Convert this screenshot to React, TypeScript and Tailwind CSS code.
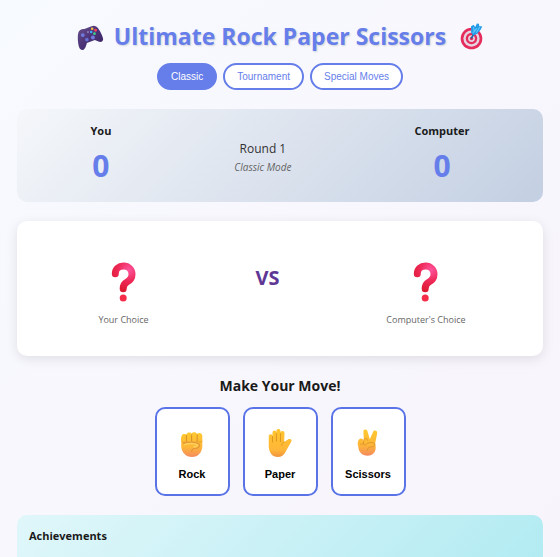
import { useState, type ReactNode } from 'react';

function Gamepad() {
  return (
    <svg viewBox="2 0 37 36" className="mt-1 h-[26px] w-[27px] shrink-0" aria-hidden="true">
      <defs>
        <linearGradient id="pad" x1="0" y1="0" x2="1" y2="1">
          <stop offset="0" stopColor="#69508a" />
          <stop offset="0.5" stopColor="#4b3278" />
          <stop offset="1" stopColor="#38225f" />
        </linearGradient>
      </defs>
      <path
        d="M3.500 11C4.500 7 8.500 5 12 5.600L22 1.800C25 0 29 1.500 31 4.500C34.500 9.500 37.500 15.500 38 19.500C38 23.500 34.500 24.500 31.500 23L26.500 20.800L15.500 24.800C14.500 28 13.500 33 10.200 34.500C6.600 35.500 4.600 32 3.800 27.500C2.800 21.500 2.500 15.500 3.500 11Z"
        fill="url(#pad)"
      />
      <circle cx="9.800" cy="14" r="2.700" fill="#7079dd" />
      <circle cx="15.500" cy="20.300" r="2.500" fill="#6771d5" />
      <circle cx="23.800" cy="17.300" r="2.700" fill="#7079dd" />
      <circle cx="17" cy="9.800" r="1.500" fill="#8d7db5" />
      <circle cx="22.800" cy="5.200" r="1.800" fill="#f4bd36" />
      <circle cx="27.500" cy="7.300" r="2" fill="#f0425c" />
      <circle cx="21.400" cy="9.700" r="1.800" fill="#3daaf5" />
      <circle cx="26" cy="12" r="1.900" fill="#3cd18b" />
    </svg>
  );
}

function Target() {
  return (
    <svg viewBox="0 0 34 40" className="h-[27px] w-[23px] shrink-0" aria-hidden="true">
      <circle cx="17" cy="23" r="16" fill="#e52c5d" />
      <circle cx="17" cy="23" r="12" fill="#e5d5e3" />
      <circle cx="17" cy="23" r="8.500" fill="#e52c5d" />
      <circle cx="17" cy="23" r="5" fill="#e5d5e3" />
      <circle cx="17" cy="23" r="2.500" fill="#e52c5d" />
      <path d="M17 22L24 11" stroke="#176a9f" strokeWidth="2.500" strokeLinecap="round" />
      <path d="M16.500 14.500L16.200 5L20 2.500L22.500 6L25 .8L28 1L28.500 4.500L33 5L30.500 10L25.500 16L19.500 18.500Z" fill="#249ce8" />
      <path d="M19 15L25 8M24 14.500L29.500 5.500M20 6L21 12" stroke="#66c8fa" strokeWidth="1.500" />
    </svg>
  );
}

function Question() {
  return (
    <svg viewBox="0 0 25 40" className="h-[40px] w-[25px]" aria-hidden="true">
      <defs>
        <radialGradient id="mark" gradientUnits="userSpaceOnUse" cx="18" cy="8" r="22">
          <stop offset="0" stopColor="#ff559e" />
          <stop offset="0.5" stopColor="#ee2957" />
          <stop offset="1" stopColor="#dc1830" />
        </radialGradient>
      </defs>
      <path
        d="M4.300 11.700C4.300 7 8 4 12.500 4C17.500 4 21 7.600 21 12.300C21 16.200 18.800 18.500 16 20C13.500 21.300 12.200 22.800 12.200 26.700"
        fill="none"
        stroke="url(#mark)"
        strokeWidth="7"
        strokeLinecap="round"
      />
      <circle cx="12.200" cy="36" r="3.500" fill="#f52d49" />
    </svg>
  );
}

function HandGradient({ id }: { id: string }) {
  return (
    <linearGradient id={id} x1="0" y1="0" x2="0" y2="1">
      <stop offset="0" stopColor="#ffc92f" />
      <stop offset="0.6" stopColor="#fdb638" />
      <stop offset="1" stopColor="#f58a60" />
    </linearGradient>
  );
}

function Fist() {
  return (
    <svg viewBox="0 0 26 32" className="h-[30px] w-[26px]" aria-hidden="true">
      <defs><HandGradient id="fist" /></defs>
      <path d="M1.500 15C1 11 1.500 7 4 6.500C5.500 6 6.500 6.500 7 7C7.500 4.500 11.500 4.200 12.500 6C14 3.800 17.500 4 18.300 6.300C20.500 4.200 24 5.500 24 8.500V19C24 26 19.500 31 13 31C6.500 31 1.500 26 1.500 19Z" fill="url(#fist)" />
      <path d="M7 7.500V14M12.600 7V14M18.500 7V14" stroke="#d18d25" strokeWidth="1" />
      <path d="M2 14.500C4 16 6.500 15.500 7.300 14C8.500 16 11.500 15.500 12.700 14C14 16 17 15.500 18.500 14C20 15.500 23 15 24 14" fill="none" stroke="#df942c" strokeWidth="0.800" />
      <path d="M4 16.500C9 14.500 17 15 20.500 17C22 18 20.500 21 18.500 21.500C15 22 14 21.500 12.500 25" fill="none" stroke="#e0933c" strokeWidth="1.100" strokeLinecap="round" />
      <path d="M4.500 18C9 16.200 15 16.400 18.800 18C19 19.300 17 20.200 14.500 20" fill="none" stroke="#ffd05a" strokeWidth="1.500" />
    </svg>
  );
}

function Palm() {
  return (
    <svg viewBox="0 0 26 32" className="h-[30px] w-[26px]" aria-hidden="true">
      <defs>
        <linearGradient id="palm" x1="0" y1="0" x2="0" y2="1">
          <stop offset="0" stopColor="#ffc52e" />
          <stop offset="0.75" stopColor="#ffb638" />
          <stop offset="1" stopColor="#ee9340" />
        </linearGradient>
      </defs>
      <path d="M1 9C1 6.200 4.500 6 5 8.500V5C5 2 9 2 9.200 5V3C9.300 .3 13.300 .3 13.500 3V5C14 2.500 18 2.800 17.800 5.500L17.400 15L21.500 12.300C24 10.700 26.500 13 24.800 15L18.800 25.500C17 29 14.500 31 10.500 31C5 31 1.500 26.500 1 20Z" fill="url(#palm)" />
      <path d="M5 9V15M9.200 6V14M13.500 6V14.500M17.400 15C15.800 15.800 15 17 14.800 18.500" fill="none" stroke="#dc951f" strokeWidth="1" strokeLinecap="round" />
    </svg>
  );
}

function Victory() {
  return (
    <svg viewBox="0 0 24 32" className="h-[30px] w-[22px]" aria-hidden="true">
      <defs><HandGradient id="victory" /></defs>
      <path d="M7.500 14L7 4C6.800 .7 10.800 .5 11.500 3.500L14 12L17.500 4C18.800 1.200 22.600 2.500 22 5.500L19.700 17C21.500 21 20.500 29.500 12 29.800C5.500 30 1.500 25.500 1.500 20C.2 17.500 .7 12.500 3 11.500C5 10.500 7 12 7.500 14Z" fill="url(#victory)" />
      <path d="M3.500 17C5 18.500 7 17 7.200 14.500V17.500C8.500 19 10 18 11 16.500C14 15 18 15 19.500 17C20 19.500 17 20.500 14.500 20.300C12.500 20.500 11.500 22 11.200 24M7.500 13C8 10 11.500 10.500 11.700 13" fill="none" stroke="#dc9130" strokeWidth="1" strokeLinecap="round" />
    </svg>
  );
}

const modes = ['Classic', 'Tournament', 'Special Moves'];

const moves: { name: string; icon: ReactNode }[] = [
  { name: 'Rock', icon: <Fist /> },
  { name: 'Paper', icon: <Palm /> },
  { name: 'Scissors', icon: <Victory /> },
];

function Score({ name, value }: { name: string; value: number }) {
  return (
    <div className="text-center">
      <h2 className="text-[11px] leading-4 font-bold">{name}</h2>
      <p className="mt-[7px] text-[30px] leading-10 font-bold text-[#667eea]">{value}</p>
    </div>
  );
}

function Choice({ label }: { label: string }) {
  return (
    <div className="flex flex-col items-center gap-3">
      <Question />
      <p className="text-[9px] leading-3 text-[#666666]">{label}</p>
    </div>
  );
}

export default function App() {
  const [mode, setMode] = useState('Classic');
  return (
    <main className="min-h-screen bg-linear-to-br from-[#f7faff] to-[#f8f4fb] px-[17px] pt-[18px] font-['Open_Sans','Noto_Sans',sans-serif] text-[#1a1a1a]">
      <header className="flex items-center justify-center gap-[10px]">
        <Gamepad />
        <h1 className="text-[23px] leading-9 font-bold whitespace-nowrap text-[#667eea] [text-shadow:1px_1px_2px_rgba(0,0,0,0.15)]">
          Ultimate Rock Paper Scissors
        </h1>
        <span className="ml-1 flex"><Target /></span>
      </header>

      <nav className="mt-[9px] flex justify-center gap-[6px] font-['Liberation_Sans',Arial,sans-serif]">
        {modes.map((m) => (
          <button
            key={m}
            type="button"
            onClick={() => setMode(m)}
            className={`h-[27px] rounded-full border-2 border-[#667eea] px-3 text-[10px] leading-4 ${
              mode === m ? 'bg-[#667eea] text-white' : 'bg-white text-[#667eea]'
            }`}
          >
            {m}
          </button>
        ))}
      </nav>

      <section className="mt-[19px] flex items-center justify-around rounded-[10px] bg-linear-135 from-[#f5f7fa] to-[#c3cfe2] px-3 pt-[14px] pb-[16px]">
        <Score name="You" value={0} />
        <div className="pt-1 text-center">
          <p className="text-xs leading-5 text-[#333333]">Round 1</p>
          <p className="text-[10px] leading-4 text-[#666666] italic">Classic Mode</p>
        </div>
        <Score name="Computer" value={0} />
      </section>

      <section className="mt-[19px] flex items-start justify-around rounded-[10px] bg-white pr-6 pl-7 pt-[41px] pb-[30px] shadow-[0_3px_12px_rgba(0,0,0,0.1)]">
        <Choice label="Your Choice" />
        <p className="pt-1 text-xl leading-6 font-bold text-[#5f3795]">VS</p>
        <Choice label="Computer's Choice" />
      </section>

      <section className="mt-5 text-center">
        <h2 className="text-sm leading-5 font-bold">Make Your Move!</h2>
        <div className="mt-[11px] flex justify-center gap-[13px] font-['Liberation_Sans',Arial,sans-serif]">
          {moves.map((m) => (
            <button
              key={m.name}
              type="button"
              className="flex h-[89px] w-[75px] flex-col items-center justify-center gap-2 rounded-[10px] border-2 border-[#5a74e8] bg-white pt-[7px] text-[11px] leading-4 font-bold text-black"
            >
              {m.icon}
              {m.name}
            </button>
          ))}
        </div>
      </section>

      <section className="mt-[19px] rounded-t-[10px] bg-linear-135 from-[#e0f7fa] to-[#b2ebf2] px-3 pt-[11px] pb-[11px]">
        <h2 className="text-[11px] leading-5 font-bold">Achievements</h2>
      </section>
    </main>
  );
}
